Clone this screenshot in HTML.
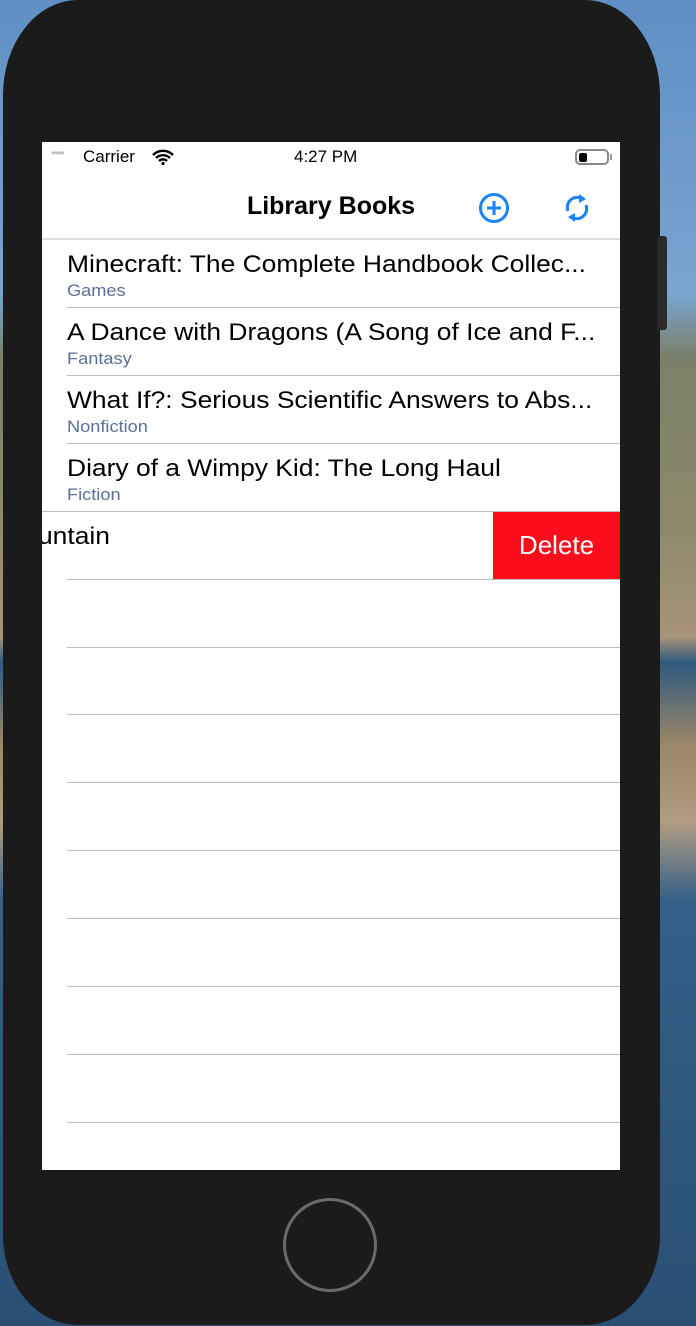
<!DOCTYPE html>
<html><head><meta charset="utf-8"><style>
*{margin:0;padding:0;box-sizing:border-box}
body{width:696px;height:1326px;overflow:hidden;position:relative;font-family:"Liberation Sans",sans-serif;
background:linear-gradient(180deg,#5f8fc4 0%,#78a6d2 22%,#7a8068 27%,#8f8a6c 40%,#a89478 48%,#2f5a80 50%,#9a8668 56%,#b09c80 62%,#34608a 68%,#2a4f73 100%);}
.phone{position:absolute;left:3px;top:0;width:657px;height:1325px;background:#1b1b1b;border-radius:75px 75px 75px 75px / 95px 95px 90px 90px;}
.btn{position:absolute;left:657px;top:236px;width:10px;height:94px;background:#2a2a2a;border-radius:3px}
.screen{position:absolute;left:42px;top:142px;width:578px;height:1028px;background:#fff;overflow:hidden}
.sb{position:absolute;top:0;left:0;width:578px;height:30px;font-size:17px;color:#000}
.nav{position:absolute;top:30px;left:0;width:578px;height:68px;border-bottom:2px solid #ddd}
.title{position:absolute;left:0;width:578px;top:20px;text-align:center;font-size:25px;font-weight:bold}
.row{position:absolute;left:0;width:578px;height:68px}
.row .t{position:absolute;left:25px;top:9px;font-size:24px;color:#000;white-space:nowrap;transform:scaleX(1.1);transform-origin:0 0}
.row .s{position:absolute;left:25px;top:39px;font-size:17px;color:#5c6f96;transform:scaleX(1.07);transform-origin:0 0}
.sep{position:absolute;left:25px;right:0;height:1px;background:#bcbcbc}
.home{position:absolute;left:283px;top:1198px;width:94px;height:94px;border:3px solid #6b6b6b;border-radius:50%}
</style></head><body>
<div class="phone"></div><div class="btn"></div>
<div class="screen">
 <div class="sb">
  <span style="position:absolute;left:9px;top:4px;color:#bbb;font-size:12px;letter-spacing:-1px">••••</span>
  <span style="position:absolute;left:41px;top:5px">Carrier</span>
  <svg style="position:absolute;left:110px;top:7px" width="22" height="16" viewBox="0 0 22 16"><path d="M1 6a14 14 0 0 1 20 0M4 9a10 10 0 0 1 14 0M7 12a5.5 5.5 0 0 1 8 0" stroke="#000" stroke-width="2.4" fill="none"/><circle cx="11" cy="14.5" r="1.6"/></svg>
  <span style="position:absolute;left:252px;top:5px">4:27 PM</span>
  <div style="position:absolute;left:533px;top:7px;width:34px;height:16px;border:2px solid #888;border-radius:5px"><div style="position:absolute;left:2px;top:2px;width:8px;height:9px;background:#000;border-radius:2px"></div></div>
  <div style="position:absolute;left:568px;top:12px;width:2px;height:6px;background:#999"></div>
 </div>
 <div class="nav">
  <div class="title">Library Books</div>
  <svg style="position:absolute;left:436px;top:20px" width="32" height="32" viewBox="0 0 32 32"><circle cx="16" cy="16" r="13.5" stroke="#1a82fb" stroke-width="3" fill="none"/><path d="M16 9v14M9 16h14" stroke="#1a82fb" stroke-width="3"/></svg>
  <svg style="position:absolute;left:519px;top:19px" width="32" height="34" viewBox="0 0 32 34"><path d="M7 20A10 10 0 0 1 21 7.5" stroke="#1a82fb" stroke-width="3" fill="none"/><path d="M18 3l7 5-7 4z" fill="#1a82fb"/><path d="M25 14A10 10 0 0 1 11 26.5" stroke="#1a82fb" stroke-width="3" fill="none"/><path d="M14 31l-7-5 7-4z" fill="#1a82fb"/></svg>
 </div>
 <div class="row" style="top:100px"><div class="t">Minecraft: The Complete Handbook Collec...</div><div class="s">Games</div></div>
 <div class="sep" style="top:165px"></div>
 <div class="row" style="top:168px"><div class="t">A Dance with Dragons (A Song of Ice and F...</div><div class="s">Fantasy</div></div>
 <div class="sep" style="top:233px"></div>
 <div class="row" style="top:236px"><div class="t">What If?: Serious Scientific Answers to Abs...</div><div class="s">Nonfiction</div></div>
 <div class="sep" style="top:301px"></div>
 <div class="row" style="top:304px"><div class="t">Diary of a Wimpy Kid: The Long Haul</div><div class="s">Fiction</div></div>
 <div style="position:absolute;left:0;top:369px;width:578px;height:1px;background:#bcbcbc"></div>
 <div class="row" style="top:372px"><div class="t" style="left:-4px">untain</div></div>
 <div style="position:absolute;left:451px;top:370px;width:127px;height:67px;background:#fc0d1b;color:#fff;font-size:26px;text-align:center;line-height:67px">Delete</div>
 <div class="sep" style="top:437px"></div>
 <div class="sep" style="top:505px"></div>
 <div class="sep" style="top:572px"></div>
 <div class="sep" style="top:640px"></div>
 <div class="sep" style="top:708px"></div>
 <div class="sep" style="top:776px"></div>
 <div class="sep" style="top:844px"></div>
 <div class="sep" style="top:912px"></div>
 <div class="sep" style="top:980px"></div>
</div>
<div class="home"></div>
</body></html>
